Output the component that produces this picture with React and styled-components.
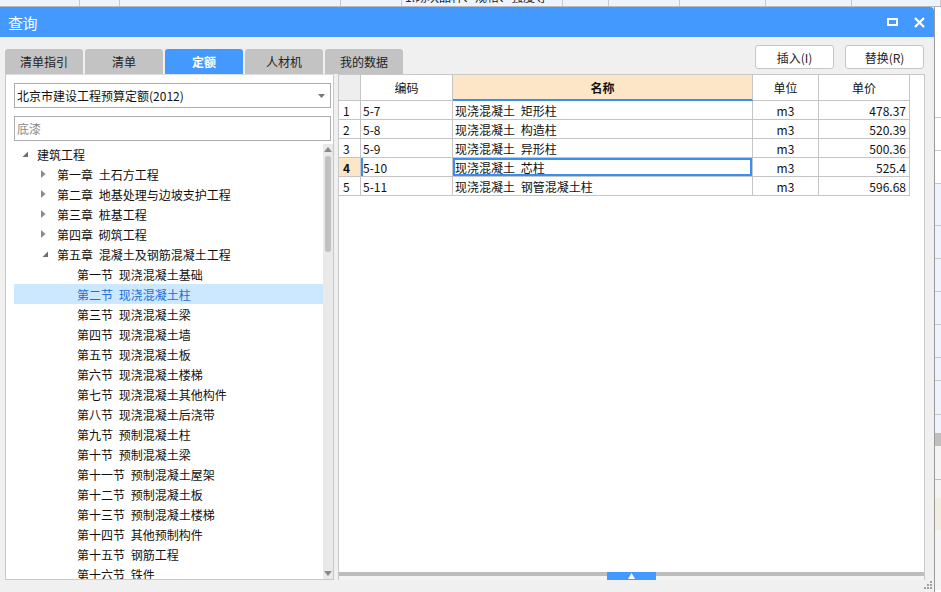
import React from 'react';
import styled, { createGlobalStyle } from 'styled-components';

const FONT = `"Noto Sans CJK SC", "Noto Sans", sans-serif`;
const BLUE = '#4499ff';

const Global = createGlobalStyle`
  html, body { margin: 0; padding: 0; }
  body { font-family: ${FONT}; font-size: 12px; color: #111; background: #fff; }
  * { box-sizing: border-box; }
`;

const Screen = styled.div`
  width: 941px;
  height: 592px;
  overflow: hidden;
  display: flex;
  flex-direction: column;
  background: #fff;
`;

/* ---------- background application behind the dialog ---------- */
const TopStrip = styled.div`
  height: 7px;
  flex: none;
  display: flex;
  background: #eef4ff;
  border-bottom: 1px solid #b8b8b8;
  overflow: hidden;
`;
const StripCell = styled.div`
  width: ${p => p.$w}px;
  flex: none;
  border-right: 1px solid #c8c8c8;
  overflow: hidden;
  position: relative;
`;
const StripText = styled.div`
  margin-top: -10px;
  padding-left: 3px;
  font-size: 12px;
  line-height: 14px;
  white-space: nowrap;
  color: #222;
`;

const Main = styled.div`
  flex: 1;
  display: flex;
  min-height: 0;
`;

const Sliver = styled.div`
  flex: 1;
  display: flex;
  flex-direction: column;
  border-left: 1px solid #9a9a9a;
`;
const SliverBlock = styled.div`
  height: ${p => p.$h}px;
  flex: none;
  background: ${p => p.$bg};
  border-bottom: 1px solid ${p => p.$line || 'transparent'};
  font-size: 9px;
  line-height: 1;
  overflow: hidden;
`;

/* ---------- dialog ---------- */
const Dialog = styled.div`
  width: 934px;
  flex: none;
  display: flex;
  flex-direction: column;
  background: #f0f0f0;
`;

const TitleBar = styled.div`
  height: 30px;
  flex: none;
  background: ${BLUE};
  border-top-right-radius: 4px;
  display: flex;
  align-items: center;
  justify-content: space-between;
  padding: 0 8px 0 8px;
  color: #fff;
  font-size: 15px;
`;
const TitleText = styled.span`
  letter-spacing: -0.5px;
`;
const TitleIcons = styled.div`
  display: flex;
  align-items: center;
  gap: 16px;
`;

const Toolbar = styled.div`
  height: 37px;
  flex: none;
  display: flex;
  justify-content: space-between;
  padding: 0 10px 0 5px;
`;
const Tabs = styled.div`
  display: flex;
  align-items: flex-end;
  gap: 2px;
`;
const Tab = styled.div`
  width: 78px;
  height: 25px;
  border-radius: 3px 3px 0 0;
  background: ${p => (p.$active ? BLUE : '#c3c3c3')};
  color: ${p => (p.$active ? '#fff' : '#222')};
  font-weight: ${p => (p.$active ? 700 : 400)};
  font-size: 12px;
  display: flex;
  align-items: center;
  justify-content: center;
`;
const Buttons = styled.div`
  display: flex;
  gap: 11px;
  padding-top: 8px;
`;
const Button = styled.div`
  width: 79px;
  height: 24px;
  background: #fff;
  border: 1px solid #c6c6c6;
  border-radius: 3px;
  font-size: 12px;
  color: #222;
  display: flex;
  align-items: center;
  justify-content: center;
`;

const Content = styled.div`
  height: 506px;
  flex: none;
  display: flex;
  gap: 4px;
  padding-left: 5px;
`;

/* ---------- left panel ---------- */
const LeftPanel = styled.div`
  width: 329px;
  flex: none;
  background: #fff;
  border: 1px solid #c8c8c8;
  border-top: 1px solid #dcdcdc;
  display: flex;
  flex-direction: column;
  padding: 8px 0 0 8px;
`;
const Select = styled.div`
  width: 317px;
  height: 25px;
  flex: none;
  border: 1px solid #abadb3;
  display: flex;
  align-items: center;
  justify-content: space-between;
  padding: 0 5px 0 2px;
  font-size: 12px;
  color: #111;
`;
const Search = styled.div`
  width: 317px;
  height: 25px;
  flex: none;
  margin-top: 8px;
  border: 1px solid #abadb3;
  display: flex;
  align-items: center;
  padding-left: 2px;
  font-size: 12px;
  color: #8a8a8a;
`;
const TreeWrap = styled.div`
  flex: 1;
  margin-top: 3px;
  display: flex;
  min-height: 0;
  overflow: hidden;
`;
const TreeList = styled.div`
  flex: 1;
  overflow: hidden;
`;
const TreeRow = styled.div`
  height: 20px;
  display: flex;
  align-items: center;
  padding-left: ${p => 7 + p.$level * 20}px;
  background: ${p => (p.$selected ? '#cce8ff' : 'transparent')};
  color: ${p => (p.$selected ? '#1b6fd6' : '#111')};
  font-size: 12px;
  word-spacing: 3px;
  white-space: nowrap;
`;
const Expander = styled.span`
  width: 16px;
  flex: none;
  display: flex;
  align-items: center;
`;
const ScrollBar = styled.div`
  width: 10px;
  flex: none;
  background: #e9e9e9;
  display: flex;
  flex-direction: column;
  align-items: center;
  padding: 3px 0 3px;
`;
const Thumb = styled.div`
  width: 6px;
  height: 96px;
  margin-top: 4px;
  border-radius: 3px;
  background: #c1c1c1;
`;
const ScrollSpacer = styled.div`
  flex: 1;
`;

/* ---------- right panel ---------- */
const RightPanel = styled.div`
  width: 587px;
  flex: none;
  background: #fff;
  border: 1px solid #c8c8c8;
  display: flex;
  flex-direction: column;
`;
const Grid = styled.div`
  width: 571px;
  display: flex;
  flex-direction: column;
`;
const Row = styled.div`
  display: grid;
  grid-template-columns: 22px 92px 300px 66px 91px;
  height: ${p => (p.$header ? 26 : 19)}px;
`;
const Cell = styled.div`
  border-right: 1px solid #c4c4c4;
  border-bottom: 1px solid #c4c4c4;
  display: flex;
  align-items: center;
  justify-content: ${p => p.$align || 'flex-start'};
  padding: ${p => p.$pad || '0 0 0 2px'};
  font-size: 12px;
  white-space: nowrap;
  word-spacing: 3px;
  overflow: hidden;
  background: ${p => p.$bg || '#fff'};
  font-weight: ${p => (p.$bold ? 700 : 400)};
  ${p => p.$focus && `box-shadow: inset 0 0 0 2px #3a8ef0;`}
  ${p => p.$leftMark && `box-shadow: inset 2px 0 0 #3a8ef0;`}
  ${p => p.$underline && `border-bottom: 2px solid #3a8ef0;`}
  color: #111;
`;

const Splitter = styled.div`
  margin-top: auto;
  height: 8px;
  flex: none;
  display: grid;
  margin-bottom: -1px;
  background: #f4f4f4;
`;
const SplitBar = styled.div`
  grid-area: 1 / 1;
  height: 4px;
  background: #bdbdbd;
`;
const SplitHandle = styled.div`
  grid-area: 1 / 1;
  justify-self: center;
  width: 49px;
  height: 8px;
  background: ${BLUE};
  display: flex;
  align-items: center;
  justify-content: center;
`;

const Footer = styled.div`
  flex: 1;
  display: flex;
  justify-content: flex-end;
  align-items: flex-end;
  padding: 0 2px 3px 0;
`;

/* ---------- icons ---------- */
const Collapsed = () => (
  <svg width="5" height="8" viewBox="0 0 5 8">
    <path d="M0 0 L4.5 4 L0 8 Z" fill="#8c8c8c" />
  </svg>
);
const Expanded = () => (
  <svg width="7" height="7" viewBox="0 0 7 7" style={{ marginLeft: 1 }}>
    <path d="M6 0.5 L6 6 L0.5 6 Z" fill="#6e6e6e" />
  </svg>
);

const treeData = [
  { level: 0, text: '建筑工程', exp: 'open' },
  { level: 1, text: '第一章 土石方工程', exp: 'closed' },
  { level: 1, text: '第二章 地基处理与边坡支护工程', exp: 'closed' },
  { level: 1, text: '第三章 桩基工程', exp: 'closed' },
  { level: 1, text: '第四章 砌筑工程', exp: 'closed' },
  { level: 1, text: '第五章 混凝土及钢筋混凝土工程', exp: 'open' },
  { level: 2, text: '第一节 现浇混凝土基础' },
  { level: 2, text: '第二节 现浇混凝土柱', selected: true },
  { level: 2, text: '第三节 现浇混凝土梁' },
  { level: 2, text: '第四节 现浇混凝土墙' },
  { level: 2, text: '第五节 现浇混凝土板' },
  { level: 2, text: '第六节 现浇混凝土楼梯' },
  { level: 2, text: '第七节 现浇混凝土其他构件' },
  { level: 2, text: '第八节 现浇混凝土后浇带' },
  { level: 2, text: '第九节 预制混凝土柱' },
  { level: 2, text: '第十节 预制混凝土梁' },
  { level: 2, text: '第十一节 预制混凝土屋架' },
  { level: 2, text: '第十二节 预制混凝土板' },
  { level: 2, text: '第十三节 预制混凝土楼梯' },
  { level: 2, text: '第十四节 其他预制构件' },
  { level: 2, text: '第十五节 钢筋工程' },
  { level: 2, text: '第十六节 铁件' },
];

const rows = [
  { n: '1', code: '5-7', name: '现浇混凝土 矩形柱', unit: 'm3', price: '478.37' },
  { n: '2', code: '5-8', name: '现浇混凝土 构造柱', unit: 'm3', price: '520.39' },
  { n: '3', code: '5-9', name: '现浇混凝土 异形柱', unit: 'm3', price: '500.36' },
  { n: '4', code: '5-10', name: '现浇混凝土 芯柱', unit: 'm3', price: '525.4', active: true },
  { n: '5', code: '5-11', name: '现浇混凝土 钢管混凝土柱', unit: 'm3', price: '596.68' },
];

const stripCells = [80, 40, 221, 61, 161, 46, 71, 86, 86, 89];

const sliver = [
  { h: 78, bg: '#ffffff' },
  { h: 33, bg: '#ffffff', line: '#c8c8c8' },
  { h: 33, bg: '#ffffff', line: '#c8c8c8' },
  { h: 33, bg: '#ffffff', line: '#c8c8c8' },
  { h: 42, bg: '#eef4ff', line: '#c8c8c8' },
  { h: 33, bg: '#eef4ff', line: '#c8c8c8' },
  { h: 33, bg: '#eef4ff', line: '#c8c8c8' },
  { h: 33, bg: '#eef4ff', line: '#c8c8c8' },
  { h: 33, bg: '#eef4ff', line: '#c8c8c8' },
  { h: 23, bg: '#eef4ff', line: '#c8c8c8' },
  { h: 34, bg: '#eef4ff', line: '#c8c8c8' },
  { h: 18, bg: '#eef4ff' },
  { h: 13, bg: '#bfbfbf' },
  { h: 34, bg: '#f4f4f4', line: '#bdbdbd' },
  { h: 18, bg: '#f4f4f4' },
  { h: 32, bg: '#f1eedf' },
  { h: 60, bg: '#f4f4f4' },
];

export default function App() {
  return (
    <>
      <Global />
      <Screen>
        <TopStrip>
          {stripCells.map((w, i) => (
            <StripCell key={i} $w={w}>
              {i === 4 && <StripText>1.砌块品种、规格、强度等</StripText>}
            </StripCell>
          ))}
        </TopStrip>
        <Main>
          <Dialog>
            <TitleBar>
              <TitleText>查询</TitleText>
              <TitleIcons>
                <svg width="11" height="8" viewBox="0 0 11 8">
                  <rect x="1" y="1" width="9" height="6" fill="none" stroke="#fff" strokeWidth="2" />
                </svg>
                <svg width="11" height="11" viewBox="0 0 11 11" style={{ marginRight: 1 }}>
                  <path d="M1 1 L10 10 M10 1 L1 10" stroke="#fff" strokeWidth="2.2" />
                </svg>
              </TitleIcons>
            </TitleBar>

            <Toolbar>
              <Tabs>
                <Tab>清单指引</Tab>
                <Tab>清单</Tab>
                <Tab $active>定额</Tab>
                <Tab>人材机</Tab>
                <Tab>我的数据</Tab>
              </Tabs>
              <Buttons>
                <Button>插入(I)</Button>
                <Button>替换(R)</Button>
              </Buttons>
            </Toolbar>

            <Content>
              <LeftPanel>
                <Select>
                  <span>北京市建设工程预算定额(2012)</span>
                  <svg width="7" height="4" viewBox="0 0 7 4">
                    <path d="M0 0 L7 0 L3.5 4 Z" fill="#777" />
                  </svg>
                </Select>
                <Search>底漆</Search>
                <TreeWrap>
                  <TreeList>
                    {treeData.map((t, i) => (
                      <TreeRow key={i} $level={t.level} $selected={t.selected}>
                        <Expander>
                          {t.exp === 'open' && <Expanded />}
                          {t.exp === 'closed' && <Collapsed />}
                        </Expander>
                        <span>{t.text}</span>
                      </TreeRow>
                    ))}
                  </TreeList>
                  <ScrollBar>
                    <svg width="8" height="5" viewBox="0 0 8 5">
                      <path d="M0 5 L4 0 L8 5 Z" fill="#8a8a8a" />
                    </svg>
                    <Thumb />
                    <ScrollSpacer />
                    <svg width="8" height="5" viewBox="0 0 8 5">
                      <path d="M0 0 L8 0 L4 5 Z" fill="#8a8a8a" />
                    </svg>
                  </ScrollBar>
                </TreeWrap>
              </LeftPanel>

              <RightPanel>
                <Grid>
                  <Row $header>
                    <Cell $bg="#eeeeee" />
                    <Cell $align="center" $pad="0">编码</Cell>
                    <Cell $align="center" $pad="0" $bg="#fde6c8" $bold $underline>名称</Cell>
                    <Cell $align="center" $pad="0">单位</Cell>
                    <Cell $align="center" $pad="0">单价</Cell>
                  </Row>
                  {rows.map(r => (
                    <Row key={r.n}>
                      <Cell $pad="0 0 0 4px" $bg={r.active ? '#fde6c8' : '#fff'} $bold={r.active}>{r.n}</Cell>
                      <Cell $leftMark={r.active}>{r.code}</Cell>
                      <Cell $focus={r.active}>{r.name}</Cell>
                      <Cell $align="center" $pad="0">{r.unit}</Cell>
                      <Cell $align="flex-end" $pad="0 3px 0 0">{r.price}</Cell>
                    </Row>
                  ))}
                </Grid>
                <Splitter>
                  <SplitBar />
                  <SplitHandle>
                    <svg width="7" height="6" viewBox="0 0 7 6">
                      <path d="M0 6 L3.5 0 L7 6 Z" fill="#fff" />
                    </svg>
                  </SplitHandle>
                </Splitter>
              </RightPanel>
            </Content>

            <Footer>
              <svg width="8" height="8" viewBox="0 0 8 8">
                <rect x="6" y="0" width="2" height="2" fill="#a0a0a0" />
                <rect x="3" y="3" width="2" height="2" fill="#a0a0a0" />
                <rect x="6" y="3" width="2" height="2" fill="#a0a0a0" />
                <rect x="0" y="6" width="2" height="2" fill="#a0a0a0" />
                <rect x="3" y="6" width="2" height="2" fill="#a0a0a0" />
                <rect x="6" y="6" width="2" height="2" fill="#a0a0a0" />
              </svg>
            </Footer>
          </Dialog>
          <Sliver>
            {sliver.map((s, i) => (
              <SliverBlock key={i} $h={s.h} $bg={s.bg} $line={s.line} />
            ))}
          </Sliver>
        </Main>
      </Screen>
    </>
  );
}
